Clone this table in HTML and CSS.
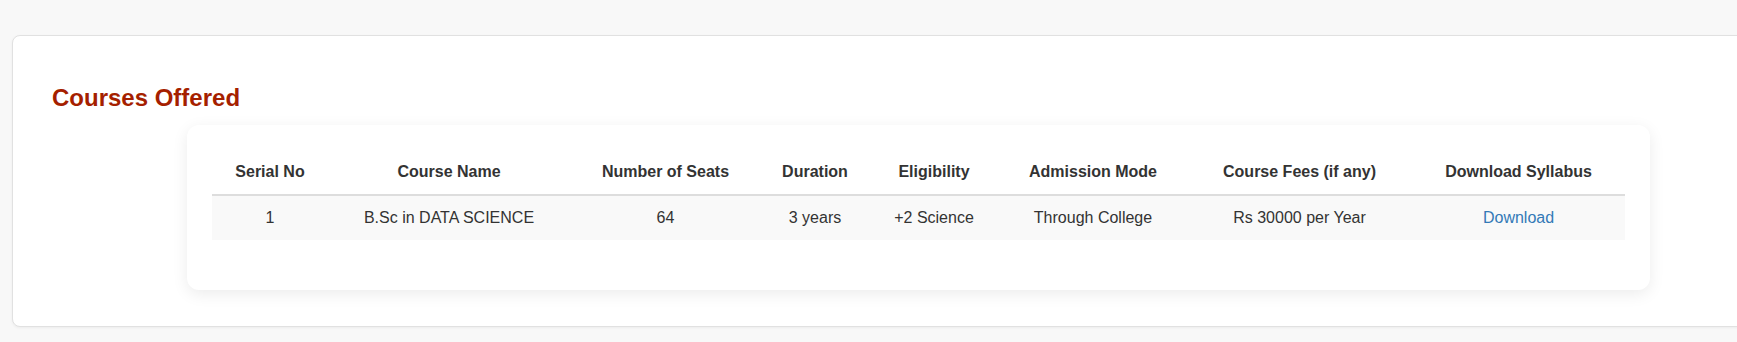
FILE: index.html
```html
<!DOCTYPE html>
<html lang="en">
<head>
<meta charset="utf-8">
<title>Courses Offered</title>
<link rel="stylesheet" href="styles.css">
</head>
<body>
<div class="page">
  <section class="outer-card">
    <h2 class="section-title">Courses Offered</h2>
    <div class="table-card">
      <table class="course-table">
        <colgroup>
          <col class="c1"><col class="c2"><col class="c3"><col class="c4">
          <col class="c5"><col class="c6"><col class="c7"><col class="c8">
        </colgroup>
        <thead>
          <tr>
            <th>Serial No</th>
            <th>Course Name</th>
            <th>Number of Seats</th>
            <th>Duration</th>
            <th>Eligibility</th>
            <th>Admission Mode</th>
            <th>Course Fees (if any)</th>
            <th>Download Syllabus</th>
          </tr>
        </thead>
        <tbody>
          <tr>
            <td>1</td>
            <td>B.Sc in DATA SCIENCE</td>
            <td>64</td>
            <td>3 years</td>
            <td>+2 Science</td>
            <td>Through College</td>
            <td>Rs 30000 per Year</td>
            <td><a class="dl-link" href="#">Download</a></td>
          </tr>
        </tbody>
      </table>
    </div>
  </section>
</div>
</body>
</html>
```

FILE: styles.css
```css
* { box-sizing: border-box; }

html, body {
  margin: 0;
  padding: 0;
  background: #f8f8f8;
  overflow: hidden;
  font-family: "Liberation Sans", Arial, sans-serif;
  color: #333;
}

.page {
  padding: 35px 0 15px 12px;
}

.outer-card {
  width: 1814px;
  background: #fff;
  border: 1px solid #e1e1e1;
  border-radius: 8px;
  box-shadow: 0 1px 3px rgba(0, 0, 0, 0.05);
  padding: 30px 40px 36px 39px;
}

.section-title {
  margin: 18px 0 13px;
  font-size: 24px;
  font-weight: bold;
  line-height: normal;
  color: #a51f00;
}

.table-card {
  width: 1463px;
  margin: 0 auto;
  background: #fff;
  border-radius: 12px;
  box-shadow: 0 4px 16px rgba(0, 0, 0, 0.08);
  padding: 25px;
}

.course-table {
  width: 1413px;
  border-collapse: collapse;
  table-layout: fixed;
  margin-bottom: 25px;
  font-size: 16px;
  line-height: 20px;
}

.c1 { width: 116px; }
.c2 { width: 242px; }
.c3 { width: 191px; }
.c4 { width: 108px; }
.c5 { width: 130px; }
.c6 { width: 188px; }
.c7 { width: 225px; }
.c8 { width: 213px; }

.course-table th,
.course-table td {
  padding: 12px 8px;
  text-align: center;
  white-space: nowrap;
}

.course-table th {
  font-weight: bold;
  color: #333;
  border-bottom: 2px solid #dddddd;
}

.course-table td {
  background: #f9f9f9;
  color: #333;
}

.dl-link {
  color: #337ab7;
  text-decoration: none;
}
```
